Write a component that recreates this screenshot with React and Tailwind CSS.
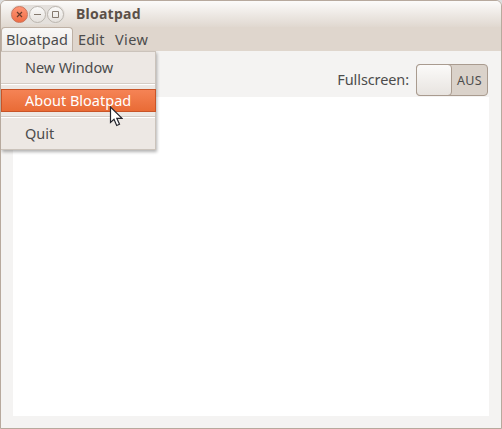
import React from "react";

function WindowButton({ close, children }) {
  return (
    <span
      className={`flex size-[17px] items-center justify-center rounded-full border ${
        close
          ? "border-[#c9755c] bg-linear-to-b from-[#ff9575] to-[#ef6d45] text-[#693c2b]"
          : "border-[#bab5ae] bg-linear-to-b from-[#fbfaf9] to-[#e5e1dd] text-[#85796e]"
      }`}
    >
      <svg width="15" height="15" viewBox="0 0 15 15" fill="none" stroke="currentColor">
        {children}
      </svg>
    </span>
  );
}

function TitleBar() {
  return (
    <header className="flex h-[26px] shrink-0 items-center bg-linear-to-b from-[#fcfbfa] to-[#e0d8d0] pl-[9px]">
      <div className="mt-px flex h-[19px] items-center gap-px rounded-full bg-[#e4e0dc] px-px">
        <WindowButton close>
          <path d="M5 5l5 5M10 5l-5 5" strokeWidth="1.2" />
        </WindowButton>
        <WindowButton>
          <path d="M4 7.5h7" />
        </WindowButton>
        <WindowButton>
          <path d="M4.5 4.5h6v6h-6z" />
        </WindowButton>
      </div>
      <h1 className="ml-[11px] text-[14px] leading-5 font-bold tracking-[0.25px] text-[#5b5048]">Bloatpad</h1>
    </header>
  );
}

function MenuBar() {
  return (
    <nav className="flex h-6 shrink-0 bg-[#dfd6cd] text-[14.5px] leading-[22px] text-[#4c4c4c]">
      <div className="flex h-6 w-[72px] rounded-t-[4px] border border-b-0 border-[#beb1a5] bg-linear-to-b from-[#f9f8f7] to-[#ece8e4] pl-1">
        <span className="tracking-[0.1px]">Bloatpad</span>
      </div>
      <span className="mt-px ml-[5px] w-[37px] tracking-[0.15px]">Edit</span>
      <span className="mt-px tracking-[0.4px]">View</span>
    </nav>
  );
}

function Separator() {
  return <div className="h-[2px] border-t border-b border-t-[#d5cdc6] border-b-white" />;
}

function AppMenu() {
  return (
    <div className="absolute top-[50px] left-0 flex h-[99px] w-[155px] flex-col border-t border-r border-b border-[#cbc3bb] bg-[#ede8e4] text-[14.5px] leading-[22px] text-[#4c4c4c] shadow-[1px_2px_3px_rgba(0,0,0,0.3)]">
      <div className="h-[31px] pt-1 pl-6 tracking-[-0.1px]">New Window</div>
      <Separator />
      <div className="-mr-px mt-1 h-[23px] border border-[#c95427] bg-linear-to-b from-[#f58355] to-[#e96b35] pl-[23px] text-white">
        <span className="block leading-[21px]">About Bloatpad</span>
      </div>
      <div className="pt-1">
        <Separator />
      </div>
      <div className="pt-1 pl-6">Quit</div>
    </div>
  );
}

function FullscreenSwitch() {
  return (
    <div className="flex h-8 w-[72px] rounded-[4px] border border-[#a99b8f] bg-[#dad2ca]">
      <span className="-my-px -ml-px h-8 w-9 rounded-[4px] border border-[#a99b8f] bg-linear-to-b from-[#fbfaf9] to-[#e8e4e0]" />
      <span className="flex-1 text-center text-[12.5px] leading-[31px] tracking-[0.3px] text-[#4c4c4c]">AUS</span>
    </div>
  );
}

function Pointer() {
  return (
    <svg className="absolute top-[105px] left-[108px]" width="14" height="22" viewBox="0 0 14 22">
      <path d="M1.5 1v15.5l3.5-3.2 2.7 6.2 2.8-1.2-2.7-6H13z" fill="#fff" stroke="#25252d" strokeWidth="1.2" />
    </svg>
  );
}

export default function App() {
  return (
    <div className="h-[429px] w-[502px] bg-[#dedede] font-['Noto_Sans',sans-serif]">
      <div className="relative flex h-full flex-col overflow-hidden rounded-t-[6px] border border-[#b7a99d] bg-[#f4f3f2]">
        <TitleBar />
        <MenuBar />
        <main className="flex flex-1 flex-col px-3 pb-3">
          <div className="flex h-[46px] items-start justify-end gap-[7px] pt-[13px] pr-px">
            <span className="text-[14.5px] leading-[30px] tracking-[-0.1px] text-[#4c4c4c]">Fullscreen:</span>
            <FullscreenSwitch />
          </div>
          <div className="flex-1 bg-white" />
        </main>
        <AppMenu />
        <Pointer />
      </div>
    </div>
  );
}
